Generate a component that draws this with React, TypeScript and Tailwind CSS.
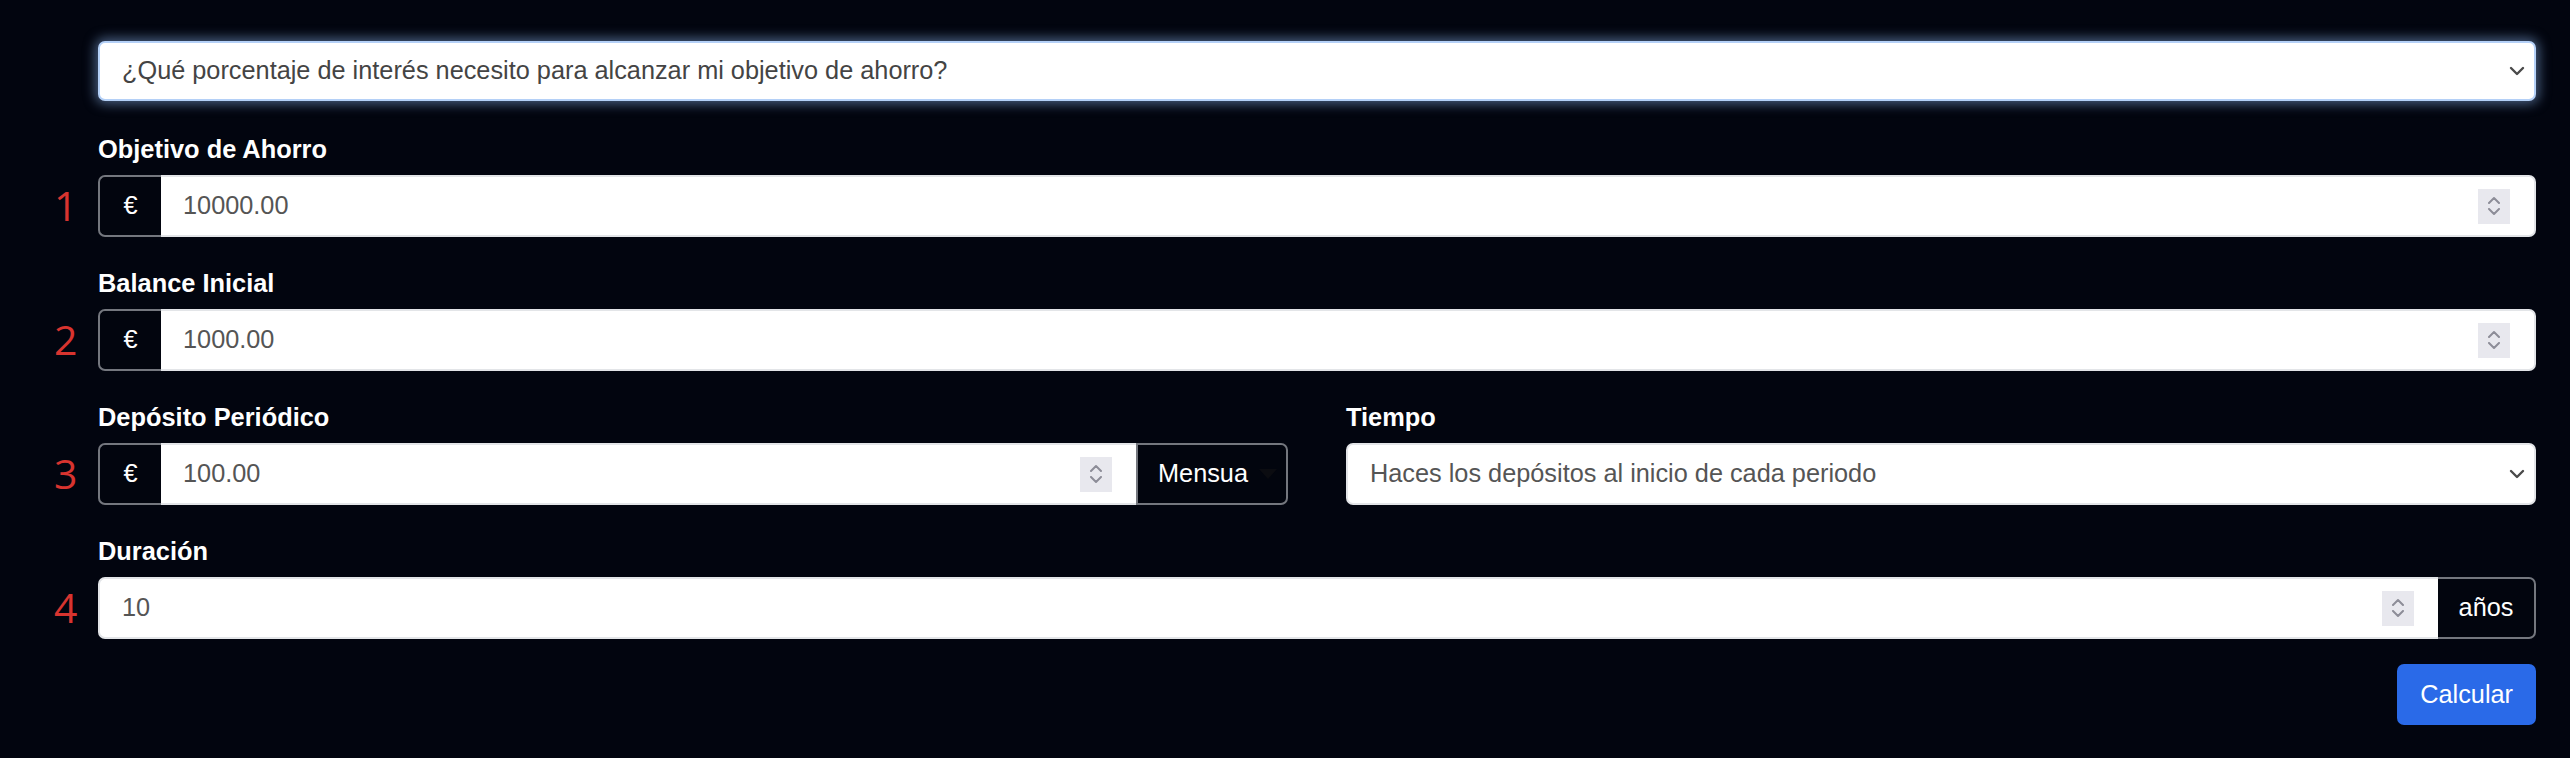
import { ReactNode } from "react";

const font = { fontFamily: '"Liberation Sans", Arial, sans-serif' };

const Chevron = ({ className = "" }: { className?: string }) => (
  <svg width="16" height="10" viewBox="0 0 16 10" className={className}>
    <path d="M2 2l6 6 6-6" fill="none" stroke="#4a4a4a" strokeWidth="2.4" strokeLinecap="round" strokeLinejoin="round" />
  </svg>
);

// fake number spinner (light box with up/down chevrons)
const Spinner = () => (
  <div className="flex-none w-[32px] h-[35px] mr-[24px] bg-[#e8e8ee] flex flex-col items-center justify-center gap-[4px]">
    <svg width="14" height="8" viewBox="0 0 14 8">
      <path d="M2 7l5-5 5 5" fill="none" stroke="#8d8d98" strokeWidth="2" strokeLinecap="round" strokeLinejoin="round" />
    </svg>
    <svg width="14" height="8" viewBox="0 0 14 8">
      <path d="M2 1l5 5 5-5" fill="none" stroke="#8d8d98" strokeWidth="2" strokeLinecap="round" strokeLinejoin="round" />
    </svg>
  </div>
);

const Label = ({ children }: { children: ReactNode }) => (
  <div className="text-white font-bold text-[25.4px] leading-[28px] mb-[12px]">{children}</div>
);

const Num = ({ n }: { n?: string }) => (
  <div className="w-[98px] flex-none flex flex-col justify-end">
    <div
      className="h-[62px] flex items-center pl-[54px] text-[41px] text-[#d8342f]"
      style={{ fontFamily: '"Open Sans", sans-serif' }}
    >
      {n}
    </div>
  </div>
);

const Addon = ({ children, side }: { children: ReactNode; side: "left" | "right" }) => (
  <div
    className={`flex-none h-full flex items-center bg-[#02050e] text-white text-[25.3px] border-2 border-[#74777e] ${
      side === "left"
        ? "w-[63px] justify-center rounded-l-[7px] border-r-0"
        : "rounded-r-[7px] border-l-0"
    }`}
  >
    {children}
  </div>
);

const NumberBox = ({ value, rounded }: { value: string; rounded: string }) => (
  <div className={`flex-1 h-full flex items-center bg-white border-2 border-[#e3e5e8] ${rounded}`}>
    <span className="flex-1 pl-[22px] text-[25.3px] text-[#555]">{value}</span>
    <Spinner />
  </div>
);

const EuroField = ({ n, label, value }: { n: string; label: string; value: string }) => (
  <div className="flex">
    <Num n={n} />
    <div className="flex-1">
      <Label>{label}</Label>
      <div className="flex h-[62px]">
        <Addon side="left">€</Addon>
        <NumberBox value={value} rounded="rounded-r-[7px] border-l-0" />
      </div>
    </div>
  </div>
);

export default function App() {
  return (
    <div className="min-h-screen bg-[#02050f] pt-[41px] pr-[34px] pb-[30px]" style={font}>
      <div className="flex flex-col gap-[32px]">
        {/* Question select */}
        <div className="flex">
          <Num />
          <div className="flex-1 h-[60px] flex items-center bg-white rounded-[7px] border-2 border-[#b4d0f7] shadow-[0_0_12px_3px_rgba(140,180,235,0.5)]">
            <span className="flex-1 pl-[22px] text-[25.3px] text-[#444]">
              ¿Qué porcentaje de interés necesito para alcanzar mi objetivo de ahorro?
            </span>
            <Chevron className="mr-[9px]" />
          </div>
        </div>

        <EuroField n="1" label="Objetivo de Ahorro" value="10000.00" />
        <EuroField n="2" label="Balance Inicial" value="1000.00" />

        {/* Deposit + timing */}
        <div className="flex">
          <Num n="3" />
          <div className="flex-1 grid grid-cols-2 gap-x-[58px]">
            <div>
              <Label>Depósito Periódico</Label>
              <div className="flex h-[62px]">
                <Addon side="left">€</Addon>
                <NumberBox value="100.00" rounded="border-x-0" />
                <div className="flex-none w-[152px] h-full flex items-center bg-[#02050e] text-white text-[25.3px] border-2 border-[#74777e] rounded-r-[7px] pl-[20px]">
                  <span className="flex-1">Mensua</span>
                  <svg width="18" height="10" viewBox="0 0 18 10" className="mr-[9px]">
                    <path d="M0 0h18L9 10z" fill="#0b0c11" />
                  </svg>
                </div>
              </div>
            </div>
            <div>
              <Label>Tiempo</Label>
              <div className="h-[62px] flex items-center bg-white rounded-[7px] border-2 border-[#e3e5e8]">
                <span className="flex-1 pl-[22px] text-[25.3px] text-[#555]">
                  Haces los depósitos al inicio de cada periodo
                </span>
                <Chevron className="mr-[9px]" />
              </div>
            </div>
          </div>
        </div>

        {/* Duration */}
        <div className="flex">
          <Num n="4" />
          <div className="flex-1">
            <Label>Duración</Label>
            <div className="flex h-[62px]">
              <NumberBox value="10" rounded="rounded-l-[7px] border-r-0" />
              <Addon side="right">
                <span className="w-[96px] text-center">años</span>
              </Addon>
            </div>
          </div>
        </div>
      </div>

      <div className="flex justify-end mt-[25px]">
        <button className="h-[61px] px-[23px] rounded-[7px] bg-[#2a6ae8] text-white text-[25.3px]">
          Calcular
        </button>
      </div>
    </div>
  );
}
